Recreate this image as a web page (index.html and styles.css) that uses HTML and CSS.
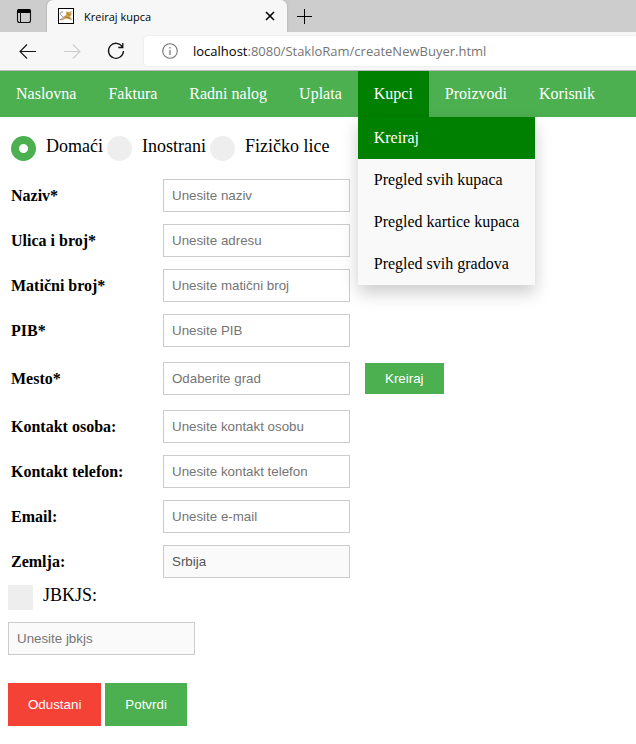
FILE: index.html
```html
<!DOCTYPE html>
<html lang="sr-Latn">
<head>
<meta charset="utf-8">
<title>Kreiraj kupca</title>
<link rel="stylesheet" href="styles.css">
</head>
<body>
<header class="browser">
  <div class="tabs">
    <button class="tab-actions" type="button" aria-label="Tab actions">
      <svg width="16" height="16" viewBox="0 0 16 16"><rect x="1.5" y="1.5" width="13" height="13" rx="2" fill="none" stroke="#111" stroke-width="1.1"/><path d="M1 5V3a2 2 0 0 1 2-2h10a2 2 0 0 1 2 2v2z" fill="#000"/><path d="M4.5 5v9.5" stroke="#111"/></svg>
    </button>
    <div class="tab">
      <svg class="favicon" width="16" height="16" viewBox="0 0 16 16"><rect x=".5" y=".5" width="15" height="15" fill="#fff" stroke="#000"/><path d="M8.500 3l1.500 1 2-.2 1.500-.8v4L12 8.500l1 1.500 1.500 1.500L13 12l-2.500-1L8 10.500 5 12l-2.500.5L5 10.500l.5-2L8 7z" fill="#d2a253"/><path d="M5 4C3 3.500 1.500 5 2.500 6.500S5 8 5 9.500L3.500 11M1.800 11.500h2" fill="none" stroke="#8b8b90"/><path d="M9 4.500l1 2 2 .5M7 9l3 .5 2 1" fill="none" stroke="#94702f" stroke-width=".8"/></svg>
      <span class="tab-title">Kreiraj kupca</span>
      <button class="tab-close" type="button" aria-label="Close tab"><svg width="10" height="10" viewBox="0 0 10 10"><path d="M1 1l8 8M9 1l-8 8" stroke="#000" stroke-width="1.6"/></svg></button>
    </div>
    <button class="tab-new" type="button" aria-label="New tab"><svg width="15" height="15" viewBox="0 0 15 15"><path d="M7.500 0v15M0 7.500h15" stroke="#000"/></svg></button>
  </div>
  <div class="toolbar">
    <button type="button" aria-label="Back"><svg width="18" height="16" viewBox="0 0 18 16"><path d="M17 8.500H1.500M8 1.500l-7 7 7 7" fill="none" stroke="#111" stroke-width="1.100"/></svg></button>
    <button type="button" aria-label="Forward" disabled><svg width="18" height="16" viewBox="0 0 18 16"><path d="M1 8.500h15.500M10 1.500l7 7-7 7" fill="none" stroke="#ccc" stroke-width="1.100"/></svg></button>
    <button type="button" aria-label="Refresh"><svg width="18" height="18" viewBox="0 0 18 18"><path d="M15.500 5A7.500 7.500 0 1 0 16.500 9M15.800 1v4.500h-4.500" fill="none" stroke="#111" stroke-width="1.300"/></svg></button>
    <div class="address">
      <svg width="16" height="16" viewBox="0 0 16 16"><circle cx="8" cy="8" r="7.300" fill="none" stroke="#757575" stroke-width="1.100"/><path d="M8 7v5M8 4v1.400" stroke="#757575" stroke-width="1.200"/></svg>
      <span>localhost<span class="path">:8080/StakloRam/createNewBuyer.html</span></span>
    </div>
  </div>
</header>
<nav class="nav">
  <a href="#">Naslovna</a>
  <a href="#">Faktura</a>
  <a href="#">Radni nalog</a>
  <a href="#">Uplata</a>
  <div class="dropdown">
    <a class="current" href="#">Kupci</a>
    <div class="menu">
      <a class="current" href="#">Kreiraj</a>
      <a href="#">Pregled svih kupaca</a>
      <a href="#">Pregled kartice kupaca</a>
      <a href="#">Pregled svih gradova</a>
    </div>
  </div>
  <a href="#">Proizvodi</a>
  <a href="#">Korisnik</a>
</nav>
<main>
  <form>
    <div class="types">
      <label class="choice"><input type="radio" name="type" checked>Domaći</label>
      <label class="choice"><input type="radio" name="type">Inostrani</label>
      <label class="choice"><input type="radio" name="type">Fizičko lice</label>
    </div>
    <div class="fields">
      <div class="row"><label for="name">Naziv*</label><input class="text" id="name" type="text" placeholder="Unesite naziv"></div>
      <div class="row"><label for="street">Ulica i broj*</label><input class="text" id="street" type="text" placeholder="Unesite adresu"></div>
      <div class="row"><label for="regno">Matični broj*</label><input class="text" id="regno" type="text" placeholder="Unesite matični broj"></div>
      <div class="row"><label for="pib">PIB*</label><input class="text" id="pib" type="text" placeholder="Unesite PIB"></div>
      <div class="row city"><label for="city">Mesto*</label><input class="text" id="city" type="text" placeholder="Odaberite grad"><button class="button small" type="button">Kreiraj</button></div>
      <div class="row"><label for="contact">Kontakt osoba:</label><input class="text" id="contact" type="text" placeholder="Unesite kontakt osobu"></div>
      <div class="row"><label for="phone">Kontakt telefon:</label><input class="text" id="phone" type="tel" placeholder="Unesite kontakt telefon"></div>
      <div class="row"><label for="email">Email:</label><input class="text" id="email" type="email" placeholder="Unesite e-mail"></div>
      <div class="row"><label for="country">Zemlja:</label><input class="text" id="country" type="text" value="Srbija" disabled></div>
    </div>
    <label class="choice"><input type="checkbox">JBKJS:</label>
    <input class="text jbkjs" type="text" placeholder="Unesite jbkjs" aria-label="JBKJS" disabled>
    <div class="actions">
      <button class="button cancel" type="button">Odustani</button>
      <button class="button" type="submit">Potvrdi</button>
    </div>
  </form>
</main>
</body>
</html>
```
FILE: styles.css
```css
* { box-sizing: border-box; }

body {
  margin: 0;
  background: #fff;
  color: #000;
  font-family: "Liberation Serif", "Times New Roman", serif;
  font-size: 16px;
}

svg { display: block; flex: none; }

/* Browser frame */
.browser {
  background: #f7f7f7;
  border-bottom: 1px solid #bcbcbc;
  font-family: "Open Sans", sans-serif;
}
.browser button {
  display: flex;
  padding: 0;
  border: 0;
  background: none;
}
.tabs {
  display: flex;
  align-items: center;
  height: 32px;
  background: #cdcdcd;
}
.browser .tab-actions { margin: 0 15px 0 16px; }
.tab {
  display: flex;
  align-items: center;
  gap: 10px;
  width: 240px;
  height: 32px;
  padding: 0 12px 0 11px;
  border-radius: 6px 6px 0 0;
  background: #f7f7f7;
  box-shadow: 0 0 2px #999;
  clip-path: inset(0 -3px 0 -3px);
}
.tab-title { flex: 1; font-size: 11px; }
.browser .tab-new { margin-left: 10px; }
.toolbar {
  display: flex;
  align-items: center;
  gap: 26px;
  height: 38px;
  padding-left: 19px;
}
.address {
  flex: 1;
  display: flex;
  align-items: center;
  gap: 15px;
  height: 30px;
  margin-left: -7px;
  padding-left: 18px;
  border-radius: 4px 0 0 4px;
  background: #fff;
  box-shadow: 0 0 2px #ddd;
  font-size: 13px;
  white-space: nowrap;
}
.path { color: #757575; }

/* Navigation */
.nav { display: flex; background: #4caf50; }
.nav a {
  display: block;
  padding: 14px 16px;
  color: #fff;
  line-height: 18px;
  text-decoration: none;
  white-space: nowrap;
}
.dropdown { position: relative; }
.menu {
  position: absolute;
  top: 100%;
  left: 0;
  z-index: 1;
  min-width: 160px;
  background: #f9f9f9;
  box-shadow: 0 8px 16px rgba(0, 0, 0, 0.2);
}
.nav .menu a { padding: 12px 16px; color: #000; }
.nav a.current,
.nav .menu a.current { background: green; color: #fff; }

/* Form */
main { padding: 16px 8px; }
.types { display: flex; gap: 4px; margin: 0 3px; }
.choice {
  display: flex;
  gap: 10px;
  font-size: 18px;
  line-height: 20px;
}
.choice input {
  appearance: none;
  flex: none;
  width: 25px;
  height: 25px;
  margin: 0;
  background: #eee;
}
.types .choice { line-height: 26px; }
.types input {
  margin-top: 3px;
  border-radius: 50%;
}
.types input:checked {
  background: radial-gradient(circle, #fff 4px, #4caf50 5px);
}
.fields {
  display: grid;
  gap: 12px;
  margin: 18px 3px 7px;
}
.row { display: flex; align-items: center; }
.row label { width: 152px; font-weight: bold; }
.city { margin: 3px 0; }
.text {
  width: 187px;
  height: 33px;
  padding: 8px;
  border: 1px solid #ccc;
  background: #fff;
  font-family: "Liberation Sans", Arial, sans-serif;
}
.text::placeholder { color: #757575; }
.text:disabled { background: #fafafa; color: #545454; }
.text:disabled::placeholder { color: #757575; }
.jbkjs { display: block; margin-top: 12px; }
.button {
  padding: 14px 20px;
  border: 0;
  background: #4caf50;
  color: #fff;
  font-family: "Liberation Sans", Arial, sans-serif;
  line-height: 15px;
}
.small { margin-left: 15px; padding: 8px 20px; }
.cancel { background: #f44336; }
.actions { display: flex; gap: 4px; margin-top: 28px; }
```
